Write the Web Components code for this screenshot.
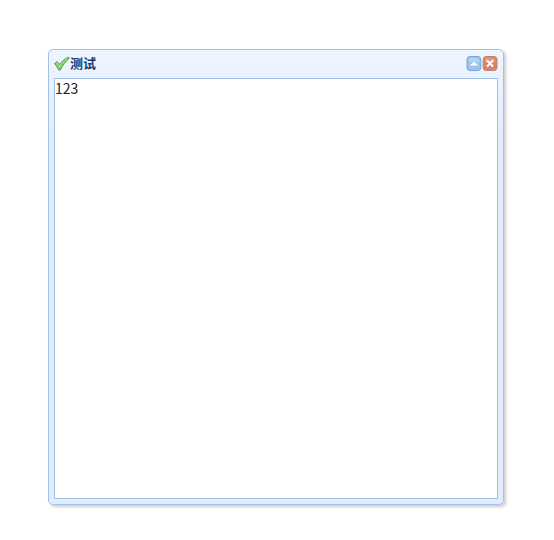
<!DOCTYPE html>
<html lang="zh-CN">
<head>
<meta charset="utf-8">
<title>测试</title>
<style>
    body {
        box-sizing: border-box;
        display: flex;
        min-height: 100vh;
        margin: 0;
        padding: 49px 50px 35px 48px;
        background: #fff;
        font-family: "Noto Sans CJK SC", sans-serif;
    }
</style>
</head>
<body>
    <ui-window>
        <ok-icon slot="icon"></ok-icon>
        <span slot="title">测试</span>
        <tool-button slot="tools" type="collapse" label="折叠"></tool-button>
        <tool-button slot="tools" type="close" label="关闭"></tool-button>
        123
    </ui-window>

<script>
// Window frame with a header and a content panel
class UiWindow extends HTMLElement {
    constructor() {
        super();
        this.attachShadow({ mode: 'open' });
        this.shadowRoot.innerHTML = `
            <style>
                :host {
                    box-sizing: border-box;
                    display: flex;
                    flex: 1;
                    flex-direction: column;
                    min-width: 0;
                    padding: 5px;
                    border: 1px solid #a3c2ea;
                    border-radius: 5px;
                    background: linear-gradient(to bottom, #eff5ff 0, #e0ecff 20%);
                    box-shadow: 2px 2px 3px #ccc;
                }

                header {
                    display: flex;
                    align-items: center;
                    height: 16px;
                    padding-bottom: 7px;
                }

                .title {
                    flex: 1;
                    color: #1d3768;
                    font-size: 13px;
                    font-weight: bold;
                    line-height: 16px;
                }

                .tools {
                    display: flex;
                }

                main {
                    flex: 1;
                    border: 1px solid #a3c2ea;
                    background: #fff;
                    color: #222;
                    font-size: 14px;
                    line-height: 18px;
                }
            </style>

            <header>
                <slot name="icon"></slot>
                <div class="title"><slot name="title"></slot></div>
                <div class="tools"><slot name="tools"></slot></div>
            </header>
            <main><slot></slot></main>
        `;
    }
}

// Green tick shown before the title
class OkIcon extends HTMLElement {
    constructor() {
        super();
        this.attachShadow({ mode: 'open' });
        this.shadowRoot.innerHTML = `
            <style>
                :host {
                    display: block;
                    width: 16px;
                    height: 16px;
                }

                svg {
                    display: block;
                }
            </style>

            <svg width="16" height="16" viewBox="0 0 16 16" aria-hidden="true">
                <path d="M.6 8.5 3.2 6.600l2.300 3C8 6.200 10.800 3.800 14.400 2.200l.9 1C11.600 6.300 8.800 10 6.200 15H4.700C3.700 12.600 2.300 10.400.6 8.500Z"
                    fill="#85d070" stroke="#4c9b43" stroke-linejoin="round"/>
                <path d="m2.200 8.500.8-.5 2.400 3.400C7.600 8.200 9.800 6 12.600 4" fill="none" stroke="#b8eba6" stroke-width=".8"/>
            </svg>
        `;
    }
}

// Header button, type is "collapse" or "close"
class ToolButton extends HTMLElement {
    constructor() {
        super();
        this.attachShadow({ mode: 'open' });
        this.shadowRoot.innerHTML = `
            <style>
                :host {
                    display: block;
                    width: 16px;
                    height: 16px;
                }

                button {
                    display: block;
                    width: 16px;
                    height: 16px;
                    padding: 0;
                    border: 0;
                    background: none;
                    cursor: pointer;
                }

                svg {
                    display: block;
                }
            </style>

            <button type="button"></button>
        `;
    }

    static get observedAttributes() {
        return ['type', 'label'];
    }

    attributeChangedCallback() {
        const button = this.shadowRoot.querySelector('button');
        button.setAttribute('aria-label', this.getAttribute('label') || '');
        button.innerHTML = this.getAttribute('type') === 'close' ? `
            <svg width="16" height="16" viewBox="0 0 16 16">
                <rect x="1.2" y="1.500" width="13.800" height="14" rx="3" fill="#d98468" stroke="#c28270"/>
                <path d="M3 4.500Q3 3 4.500 3h7Q13 3 13 4.500V7H3Z" fill="#e39c82"/>
                <path d="m5 5.500 6 6m0-6-6 6" stroke="#fff" stroke-width="2"/>
            </svg>
        ` : `
            <svg width="16" height="16" viewBox="0 0 16 16">
                <rect x="1" y="1.500" width="13.800" height="14" rx="3" fill="#9fc5ee" stroke="#79a3d4"/>
                <path d="M3 4.500Q3 3 4.500 3h7Q13 3 13 4.500V7H3Z" fill="#b4d3f3"/>
                <path d="M4 10.500 8 6.500l4 4Z" fill="#fff"/>
            </svg>
        `;
    }
}

customElements.define('ui-window', UiWindow);
customElements.define('ok-icon', OkIcon);
customElements.define('tool-button', ToolButton);
</script>
</body>
</html>
